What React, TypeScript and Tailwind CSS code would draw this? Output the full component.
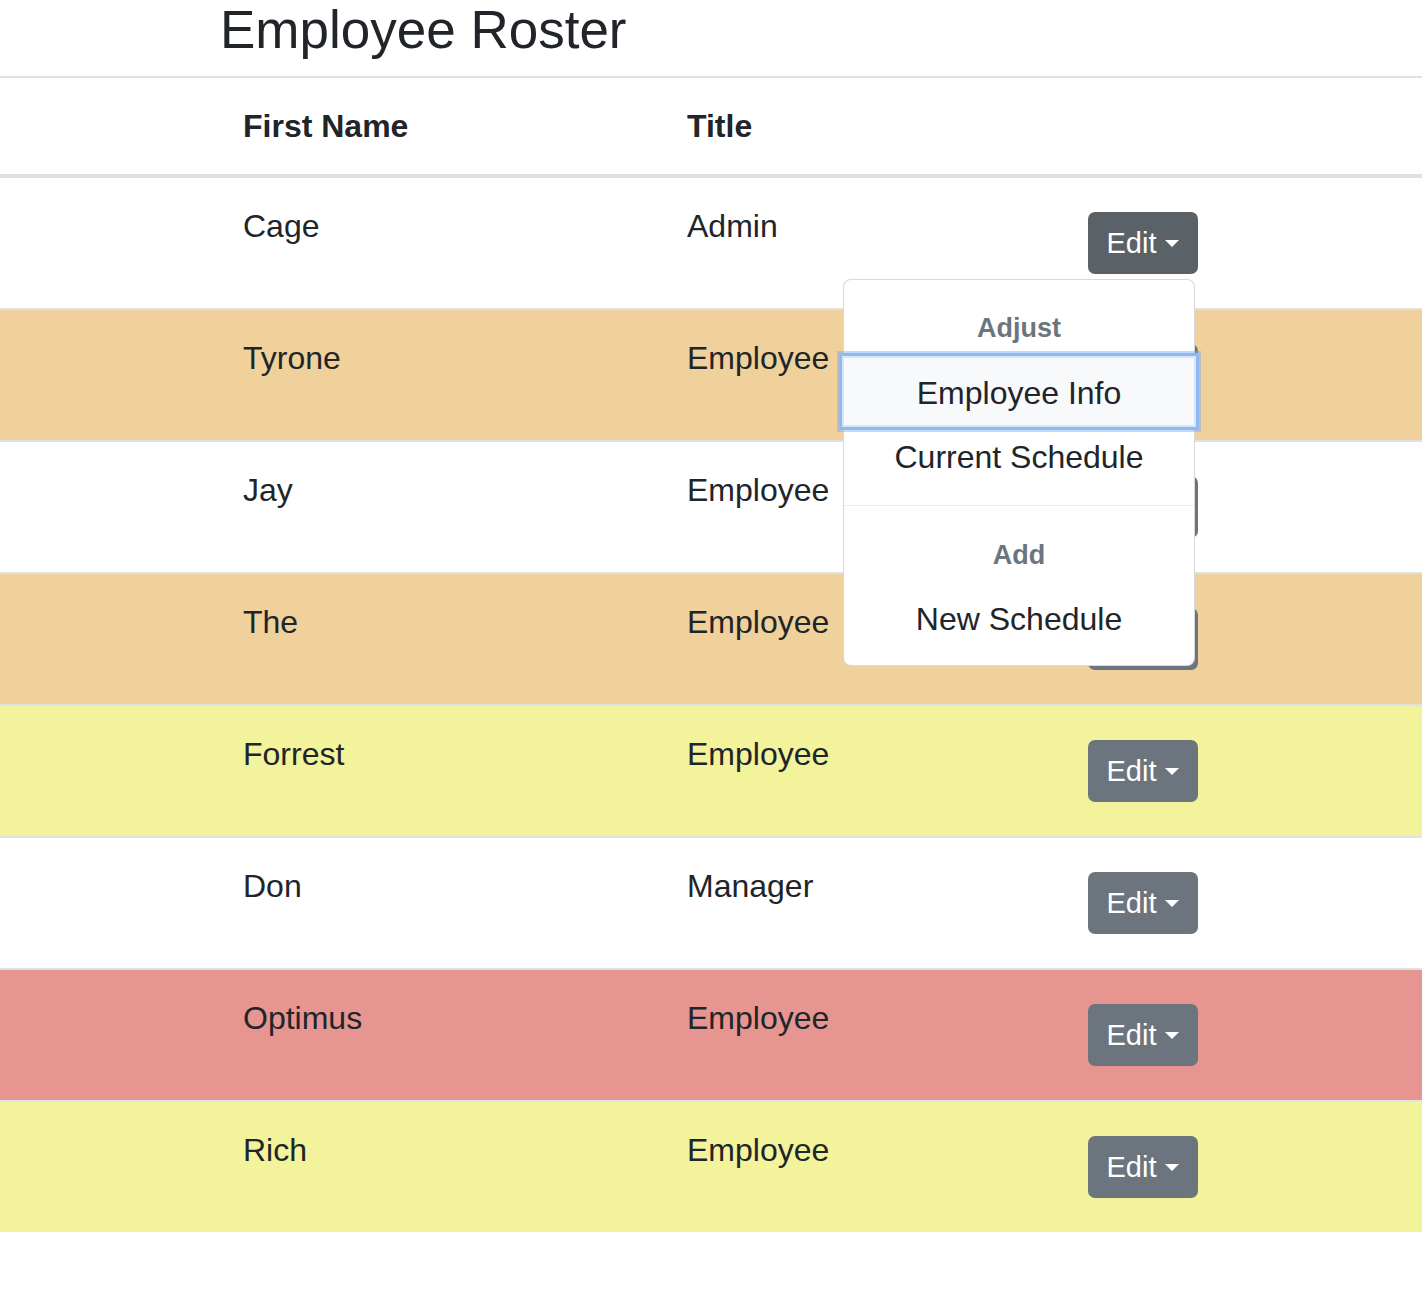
type Row = {
  name: string;
  title: string;
  bg: string;
  open?: boolean;
};

const rows: Row[] = [
  { name: "Cage", title: "Admin", bg: "bg-white", open: true },
  { name: "Tyrone", title: "Employee", bg: "bg-[#f0d19b]" },
  { name: "Jay", title: "Employee", bg: "bg-white" },
  { name: "The", title: "Employee", bg: "bg-[#f0d19b]" },
  { name: "Forrest", title: "Employee", bg: "bg-[#f3f39b]" },
  { name: "Don", title: "Manager", bg: "bg-white" },
  { name: "Optimus", title: "Employee", bg: "bg-[#e69591]" },
  { name: "Rich", title: "Employee", bg: "bg-[#f3f39b]" },
];

const EditMenu = () => {
  return (
    <div className="absolute right-[3px] top-[67px] z-10 w-[352px] rounded-[8px] border border-black/15 bg-white text-center text-[#212529]">
      <div className="pt-[28px] pb-[10px] text-[27px] font-bold leading-[40px] text-[#6c757d]">
        Adjust
      </div>
      <div className="relative bg-[#f8f9fa] pt-[10px] pb-[6px] text-[32px] leading-[51px] shadow-[0_0_0_2px_#d4e4fc,0_0_0_5px_#90b9f3,0_0_0_7px_rgba(120,170,240,0.45)]">
        Employee Info
      </div>
      <div className="py-2 text-[32px] leading-[48px]">Current Schedule</div>
      <div className="mt-4 border-t border-[#e9ecef]"></div>
      <div className="pt-[29px] pb-[12px] text-[27px] font-bold leading-[40px] text-[#6c757d]">
        Add
      </div>
      <div className="py-2 text-[32px] leading-[48px]">New Schedule</div>
      <div className="h-[14px]"></div>
    </div>
  );
};

const EditButton = ({ open }: { open?: boolean }) => {
  return (
    <div className="relative mt-[10px] w-[110px]">
      <button
        className={`flex h-[62px] w-[110px] items-center justify-center rounded-[7px] text-[29px] text-white ${
          open ? "bg-[#5a6268]" : "bg-[#6c757d]"
        }`}
      >
        Edit
        <span className="ml-[9px] inline-block border-x-[7px] border-t-[7px] border-x-transparent border-t-white"></span>
      </button>
      {open && <EditMenu />}
    </div>
  );
};

const App = () => {
  return (
    <main className="min-h-[1316px] w-[1424px] bg-white font-['Liberation_Sans',Arial,sans-serif] text-[#212529]">
      <h1 className="h-[76px] pl-[220px] text-[53px] leading-[59px]">
        Employee Roster
      </h1>
      <div className="w-[1422px]">
        <div className="grid grid-cols-[219px_444px_401px_1fr] border-t-2 border-b-4 border-[#dee2e6] text-[32px] font-bold leading-[48px]">
          <div></div>
          <div className="px-6 py-6">First Name</div>
          <div className="px-6 py-6">Title</div>
          <div></div>
        </div>
        {rows.map((row, i) => (
          <div
            key={row.name}
            className={`grid h-[130px] grid-cols-[219px_444px_401px_1fr] text-[32px] leading-[48px] ${row.bg} ${
              i > 0 ? "box-content border-t-2 border-[#dee2e6]" : ""
            }`}
          >
            <div></div>
            <div className="px-6 py-6">{row.name}</div>
            <div className="px-6 py-6">{row.title}</div>
            <div className="px-6 py-6">
              <EditButton open={row.open} />
            </div>
          </div>
        ))}
      </div>
    </main>
  );
};

export default App;
